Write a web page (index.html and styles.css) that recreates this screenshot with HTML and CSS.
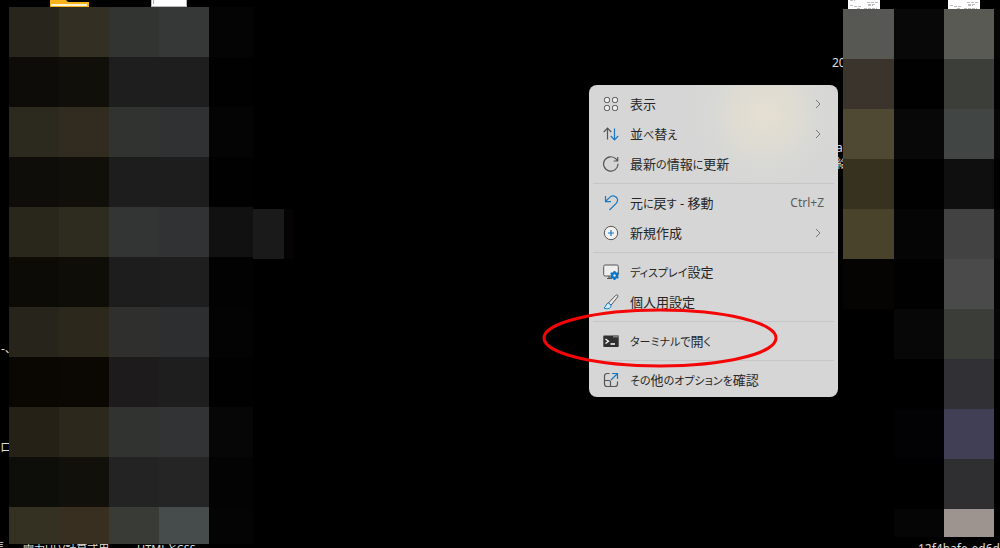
FILE: index.html
```html
<!DOCTYPE html>
<html lang="ja">
<head>
<meta charset="utf-8">
<title>デスクトップ</title>
<link rel="stylesheet" href="styles.css">
</head>
<body>
<main class="desktop">
  <svg class="file folder" width="40" height="7" viewBox="0 0 40 7" aria-hidden="true"><path d="M0 0h16l2 2h21v5H0z" fill="#f6b31c"/><path d="M1 4h36v2H1z" fill="#fff4d2"/></svg>
  <svg class="file page" width="36" height="7" viewBox="0 0 36 7" aria-hidden="true"><path d="M0 0h36v7H0z" fill="#b8b8b8"/><path d="M1 0h34v6H1z" fill="#fff"/><path d="M2 0h1v4H2z" fill="#aaa"/></svg>
  <svg class="file sheet-a" width="32" height="9" viewBox="0 0 32 9" aria-hidden="true"><path d="M0 0h32v9H0z" fill="#fff"/><path d="M2 .5h5M19 2.500h11M2 5.500h3m1 1h7M20 4.500h8m-8 1h5M9 8.500h3m4 0h13" stroke="#bbb" stroke-dasharray="3 1"/></svg>
  <svg class="file sheet-b" width="32" height="9" viewBox="0 0 32 9" aria-hidden="true"><path d="M0 0h32v9H0z" fill="#fff"/><path d="M19 2.500h11M2 5.500h3m1 1h7M20 4.500h8m-8 1h5M9 8.500h3m4 0h13" stroke="#bbb" stroke-dasharray="3 1"/></svg>

  <span class="label label-dash">-、</span>
  <span class="label label-ro">トロ</span>
  <span class="label label-edge">長</span>
  <span class="label label-power">電力ULV計算式用</span>
  <span class="label label-html">HTMLとCSS</span>
  <span class="label label-year">2023</span>
  <span class="label label-name">a<br>給</span>
  <span class="label label-id">12f4bafe-ed6d-4</span>

  <div class="mosaic mosaic-left" id="mosaic-left"></div>
  <div class="mosaic mosaic-right" id="mosaic-right"></div>
  <div class="patch"></div>

  <div class="menu" role="menu">
    <button class="item" role="menuitem">
      <svg class="icon" viewBox="0 0 16 16"><g fill="#eee" stroke="#555"><rect x="1.500" y="1.500" width="5" height="5" rx="1.700"/><rect x="9.500" y="1.500" width="5" height="5" rx="1.700"/><rect x="1.500" y="9.500" width="5" height="5" rx="1.700"/><rect x="9.500" y="9.500" width="5" height="5" rx="1.700"/></g></svg>
      <span class="text">表示</span>
      <svg class="chevron" viewBox="0 0 6 10"><path d="M1 1l4 4-4 4"/></svg>
    </button>
    <button class="item" role="menuitem">
      <svg class="icon" viewBox="0 0 16 16"><path d="M.8 6L4.500 2.200 8.200 6M4.500 2.500V13.500" class="line"/><path d="M7.800 10l3.700 3.800L15.200 10M11.500 13.500V2.500" class="line blue"/></svg>
      <span class="text">並<span class="kana">べ</span>替<span class="kana">え</span></span>
      <svg class="chevron" viewBox="0 0 6 10"><path d="M1 1l4 4-4 4"/></svg>
    </button>
    <button class="item" role="menuitem">
      <svg class="icon" viewBox="0 0 16 16"><path d="M15 7.800A7.200 7.200 0 1 1 13.200 3.200L14.500 4.800M14.700 1v4h-4" class="line"/></svg>
      <span class="text">最新<span class="kana">の</span>情報<span class="kana">に</span>更新</span>
    </button>
    <hr class="rule">
    <button class="item" role="menuitem">
      <svg class="icon" viewBox="0 0 16 16"><path d="M2.500 1v5.600H8M2.700 6.300L6.500 2.600C9-.2 13.800.8 14.500 4.200c.3 1.700-.2 3-1.300 4.100L6.500 15" class="line blue"/></svg>
      <span class="text">元<span class="kana">に</span>戻<span class="kana">す</span> - 移動</span>
      <kbd class="shortcut">Ctrl+Z</kbd>
    </button>
    <button class="item" role="menuitem">
      <svg class="icon" viewBox="0 0 16 16"><circle cx="8" cy="8" r="6.700" fill="#f2f2f2" stroke="#555"/><path d="M8 5v6M5 8h6" class="line blue"/></svg>
      <span class="text">新規作成</span>
      <svg class="chevron" viewBox="0 0 6 10"><path d="M1 1l4 4-4 4"/></svg>
    </button>
    <hr class="rule">
    <button class="item" role="menuitem">
      <svg class="icon" viewBox="0 0 16 16"><rect x=".7" y="1" width="14.600" height="11" rx="1.500" fill="#eee" stroke="#555"/><path d="M6 12v2.500M4 14.500h5" class="line"/><circle cx="11.500" cy="11.500" r="3.400" fill="#0875c9"/><path d="M11.500 7v9M7.600 9.200l7.800 4.600M7.600 13.800l7.800-4.600" stroke="#0875c9" stroke-width="2"/><circle cx="11.500" cy="11.500" r="1.200" fill="#d8e8f4"/></svg>
      <span class="text"><span class="kana">ディスプレイ</span>設定</span>
    </button>
    <button class="item" role="menuitem">
      <svg class="icon" viewBox="0 0 16 16"><path d="M5.500 9L12.800 1.300c1.200-1.100 2.700.2 1.900 1.600L8 11.200z" fill="#eee" stroke="#555"/><path d="M5.500 9C3 9 3.500 12.500 1 14c3 1.400 7.500.7 7-2.800z" fill="#d9ebf8" stroke="#0875c9"/></svg>
      <span class="text">個人用設定</span>
    </button>
    <hr class="rule">
    <button class="item" role="menuitem">
      <svg class="icon" viewBox="0 0 16 16"><path d="M1 2.500h14a.7.700 0 0 1 .7.700v10a.7.700 0 0 1-.7.700H1a.7.700 0 0 1-.7-.7v-10a.7.700 0 0 1 .7-.7z" fill="#303030"/><path d="M10 2.500h5.700v2H10z" fill="#777"/><path d="M2.500 6l3 2.300-3 2.300M7.500 11h4.500" fill="none" stroke="#fff" stroke-width="1.300"/></svg>
      <span class="text"><span class="kana">ターミナルで</span>開<span class="kana">く</span></span>
    </button>
    <hr class="rule">
    <button class="item" role="menuitem">
      <svg class="icon" viewBox="0 0 16 16"><path d="M6.500 1.500H4a2.500 2.500 0 0 0-2.500 2.500v8A2.500 2.500 0 0 0 4 14.500h8a2.500 2.500 0 0 0 2.500-2.500V9.500M1.500 8.500H6a1.500 1.500 0 0 1 1.500 1.500v4.500" class="line"/><path d="M8 8l6.500-6.500M9 1.500h5.500V7" class="line blue"/></svg>
      <span class="text"><span class="kana">その</span>他<span class="kana">のオプションを</span>確認</span>
    </button>
  </div>

  <svg class="highlight" viewBox="0 0 236 60" aria-hidden="true"><ellipse cx="118" cy="30" rx="116" ry="28"/></svg>
</main>
<script src="mosaic.js"></script>
</body>
</html>
```
FILE: styles.css
```css
body {
  margin: 0;
  background: #000;
  font-family: "Noto Sans", "Noto Sans CJK JP", sans-serif;
}

.desktop {
  position: relative;
  height: 100vh;
  overflow: hidden;
}

.file,
.label,
.mosaic,
.patch,
.menu,
.highlight {
  position: absolute;
}

.folder { left: 50px; top: 0; }
.page { left: 151px; top: 0; }
.sheet-a { left: 848px; top: 0; }
.sheet-b { left: 948px; top: 0; }

.label {
  color: #ddd;
  font-size: 12px;
  line-height: 16px;
  white-space: nowrap;
  font-feature-settings: "palt";
}

.label-dash { left: 1px; top: 341px; }
.label-ro { left: -9px; top: 440px; }
.label-edge { left: -7px; top: 541px; }
.label-power { left: 23px; top: 541px; font-size: 11px; }
.label-html { left: 137px; top: 541px; font-size: 11px; }
.label-year { left: 832px; top: 55px; }
.label-name { left: 836px; top: 140px; }
.label-id { left: 918px; top: 541px; }

.mosaic {
  display: grid;
}

.mosaic-left {
  left: 9px;
  top: 7px;
  grid-template-columns: repeat(4, 50px) 44px;
  grid-template-rows: repeat(10, 50px) 37px;
}

.mosaic-right {
  left: 843px;
  top: 9px;
  grid-template-columns: 51px 50px 50px 6px;
  grid-template-rows: repeat(10, 50px) 28px;
}

.patch {
  left: 253px;
  top: 209px;
  width: 31px;
  height: 50px;
  background: #1a1a1a;
  border-right: 9px solid #050304;
}

.menu {
  left: 589px;
  top: 85px;
  width: 249px;
  box-sizing: border-box;
  padding: 4px 4px 2px;
  border-radius: 8px;
  background: radial-gradient(circle at 176px 29px, #e5dfd3 0, #e2ddd2 18px, #dddbd3 36px, #d8d8d5 52px, #d6d6d6 75px);
}

.item {
  display: flex;
  align-items: center;
  gap: 11px;
  width: 100%;
  height: 30px;
  padding: 0 10px;
  border: 0;
  background: none;
  color: #262626;
  font: inherit;
  font-size: 13px;
  line-height: 20px;
  text-align: left;
}

.icon {
  flex: none;
  width: 16px;
  height: 16px;
}

.text {
  flex: 1;
  white-space: nowrap;
  font-feature-settings: "palt";
}

.kana {
  font-size: 11px;
}

.line {
  fill: none;
  stroke: #555;
  stroke-width: 1.2;
}

.blue {
  stroke: #1878c4;
}

.chevron {
  width: 6px;
  height: 10px;
  margin-right: 3px;
  fill: none;
  stroke: #777;
}

.shortcut {
  font-family: inherit;
  font-size: 12px;
  color: #5c5c5c;
}

.rule {
  height: 1px;
  margin: 4px 0;
  border: 0;
  background: #c6c6c6;
}

.highlight {
  left: 542px;
  top: 308px;
  width: 236px;
  height: 60px;
  fill: none;
  stroke: #f40606;
  stroke-width: 3;
}
```
FILE: mosaic.js
```js
const tiles = {
  "mosaic-left": [
    "#28251d #333023 #323431 #363837 #040404",
    "#0d0c08 #100f09 #1e1e1e #1e1e1e #010101",
    "#2c2a1f #322c20 #313330 #303133 #040404",
    "#0e0d09 #100f0a #1d1d1d #1d1d1d #010101",
    "#29261b #2e2c1f #323533 #313233 #111111",
    "#0c0b06 #0e0d08 #1d1d1d #1e1e1e #020202",
    "#27251b #2d281c #2f2f2d #2d2e30 #030303",
    "#0a0702 #0b0803 #1e1b1c #1e1e1e #010101",
    "#252117 #2c281c #313330 #323334 #060606",
    "#0d0d09 #11100a #232323 #252525 #030303",
    "#343022 #382f21 #393b36 #464c4c #040404"
  ],
  "mosaic-right": [
    "#575853 #080808 #5a5a55 #050505",
    "#3a342d #010101 #3c3e39 #020202",
    "#4f4933 #080808 #414645 #060606",
    "#373120 #010101 #0f0f0f #010101",
    "#4a432c #050505 #424242 #060606",
    "#060402 #010101 #4a4a4a #020202",
    "#000000 #070707 #3b3d39 #060606",
    "#000000 #000000 #303035 #000000",
    "#000000 #020205 #403f55 #000000",
    "#000000 #000000 #2f2e31 #000000",
    "#000000 #050505 #9d9490 #000000"
  ]
};

for (const [id, rows] of Object.entries(tiles)) {
  const grid = document.getElementById(id);
  for (const color of rows.join(" ").split(" ")) {
    const tile = document.createElement("div");
    if (color !== "#000000") tile.style.background = color;
    grid.append(tile);
  }
}
```
